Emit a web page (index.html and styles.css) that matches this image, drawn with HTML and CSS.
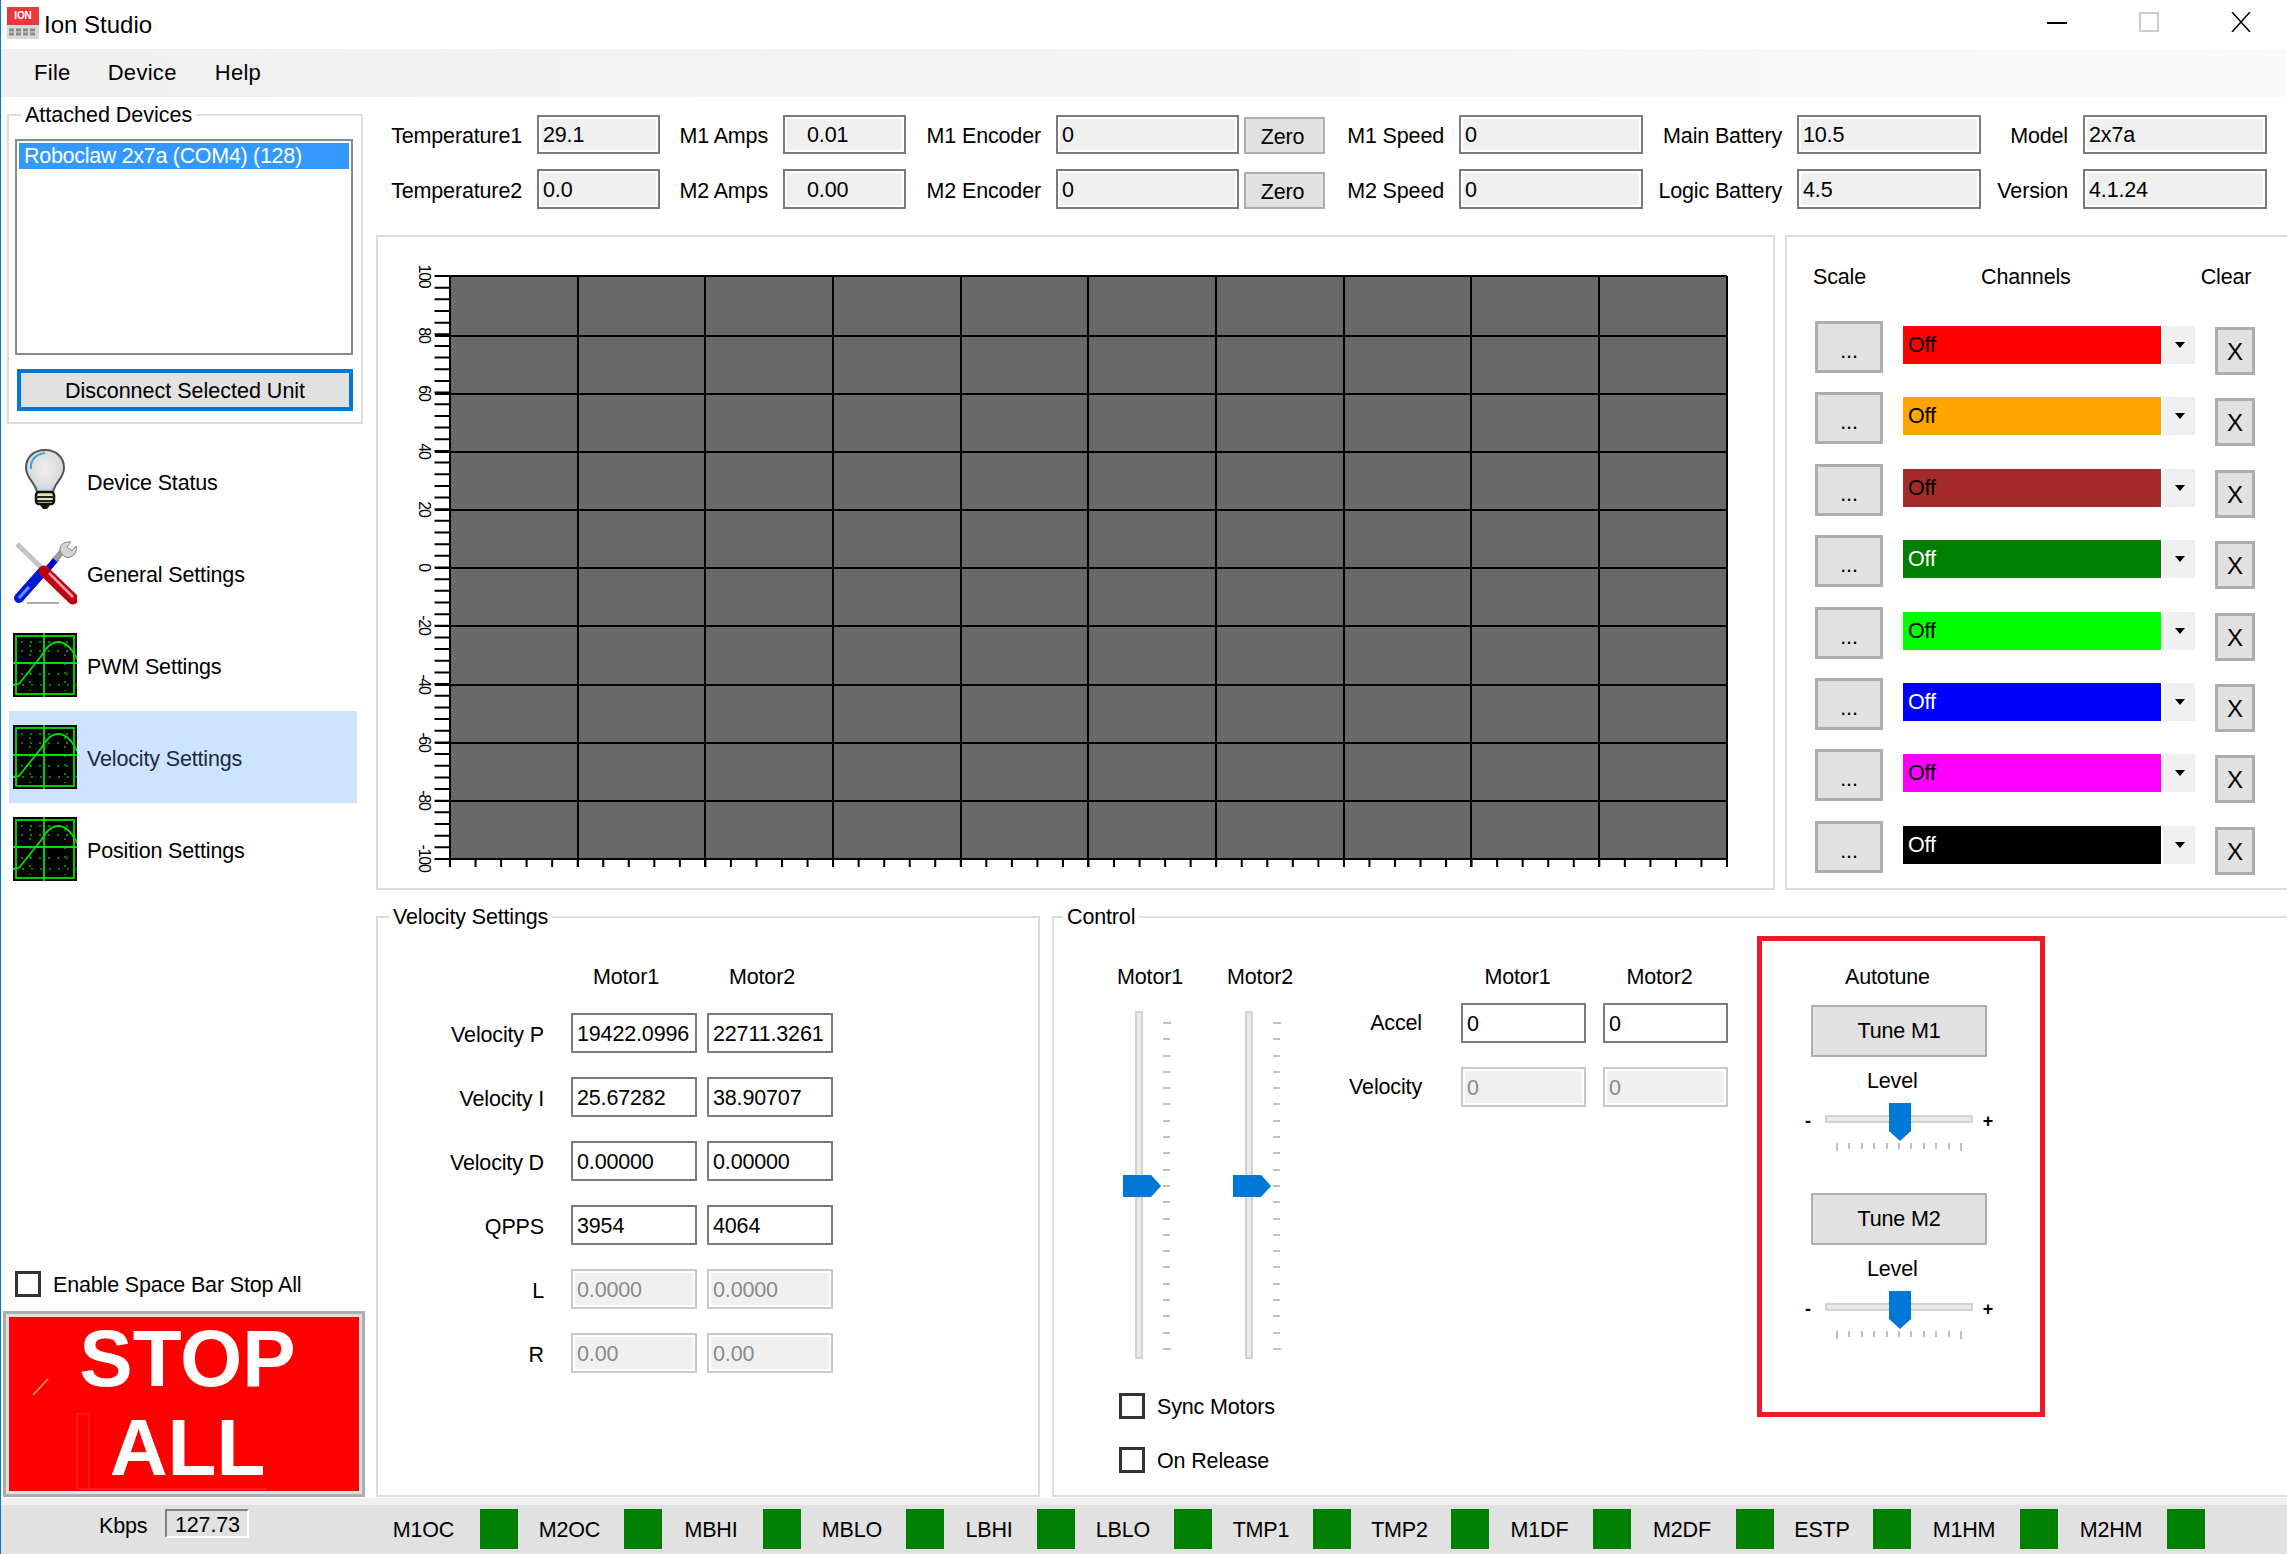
FILE: index.html
```html
<!DOCTYPE html>
<html lang="en">
<head>
    <meta charset="UTF-8">
    <title>Ion Studio</title>
    <link rel="stylesheet" href="styles.css">
</head>
<body>
    <!-- shared scope icon for the settings pages -->
    <svg class="defs" width="0" height="0">
        <symbol id="scope" viewBox="0 0 64 64">
            <rect class="scope-bg" width="64" height="64"/>
            <g class="scope-dots" fill="none" stroke-dasharray="2 7">
                <path d="M8 9H58M8 18H58M8 41H58M0 52H64"/>
                <path d="M17 12V58M52 12V58"/>
            </g>
            <g class="scope-line" fill="none" stroke-width="1.8">
                <rect x="3" y="3" width="58" height="58"/>
                <path d="M31 0V64M0 30H64"/>
                <path d="M0 52L6 51L29 22Q36 9 45 9Q56 9 64 26"/>
            </g>
        </symbol>
    </svg>

    <div class="window">
        <div class="titlebar">
            <svg class="logo" width="32" height="32" viewBox="0 0 32 32">
                <rect width="32" height="18" fill="#e8383c"/>
                <text x="16" y="12" text-anchor="middle" class="logo-text">ION</text>
                <rect y="18" width="32" height="14" fill="#d8d8d8"/>
                <path d="M2 23H30M2 27H30" stroke="#8a8a8a" stroke-width="3" stroke-dasharray="5 2"/>
            </svg>
            <span class="title">Ion Studio</span>
            <div class="caption-buttons">
                <div class="caption-btn"><svg width="20" height="20"><path d="M0 11H20" stroke="#000" stroke-width="2"/></svg></div>
                <div class="caption-btn"><svg width="20" height="20"><rect x="1" y="1" width="18" height="18" fill="none" stroke="#ccc" stroke-width="2"/></svg></div>
                <div class="caption-btn"><svg width="20" height="20"><path d="M1 0L19 20M19 0L1 20" stroke="#000" stroke-width="1.5"/></svg></div>
            </div>
        </div>

        <div class="menubar">
            <span class="menu-file">File</span>
            <span class="menu-device">Device</span>
            <span class="menu-help">Help</span>
        </div>

        <div class="main">
            <div class="sidebar">
                <fieldset class="group devices">
                    <legend class="devices-legend">Attached Devices</legend>
                    <div class="listbox">
                        <div class="list-selected">Roboclaw 2x7a (COM4) (128)</div>
                    </div>
                    <div class="btn disconnect">Disconnect Selected Unit</div>
                </fieldset>

                <div class="nav">
                    <div class="nav-item">
                        <svg class="nav-icon" viewBox="0 0 64 64">
                            <defs>
                                <radialGradient id="glass" cx="50%" cy="45%" r="55%">
                                    <stop offset="0" stop-color="#efefef"/>
                                    <stop offset=".75" stop-color="#dcdcdc"/>
                                    <stop offset="1" stop-color="#b4d0ee"/>
                                </radialGradient>
                            </defs>
                            <path d="M32 1C20 1 13 9 13 19C13 29 22 33 24 43H40C42 33 51 29 51 19C51 9 44 1 32 1Z" fill="url(#glass)" stroke="#555" stroke-width="2"/>
                            <path d="M18 20C17 11 23 5 32 4" fill="none" stroke="#3ea6d8" stroke-width="2"/>
                            <rect x="23" y="43" width="18" height="12" rx="3" fill="#e8e6b0" stroke="#111" stroke-width="2.5"/>
                            <path d="M23 48H41M24 52H40" stroke="#222" stroke-width="2"/>
                            <path d="M27 56H37L34 60H30Z" fill="#111"/>
                        </svg>
                        <span>Device Status</span>
                    </div>
                    <div class="nav-item">
                        <svg class="nav-icon" viewBox="0 0 64 64">
                            <path d="M14 62H46" stroke="#aaa" stroke-width="2"/>
                            <path d="M4 3L36 34" stroke="#c4c4c4" stroke-width="5"/>
                            <path d="M33 30L44 17" stroke="#0000c8" stroke-width="6"/>
                            <path d="M42 19L53 6" stroke="#9a9a9a" stroke-width="6"/>
                            <path d="M48 12C44 4 52 0 58 1L54 6L59 10L63 5C65 12 59 18 52 16Z" fill="#d4d4d4" stroke="#888"/>
                            <path d="M6 57L30 30" stroke="#0018d0" stroke-width="10" stroke-linecap="round"/>
                            <path d="M6 57L16 46" stroke="#5a90ff" stroke-width="3"/>
                            <path d="M31 30L60 58" stroke="#c00010" stroke-width="11" stroke-linecap="round"/>
                            <path d="M36 32L60 56" stroke="#ffa0a8" stroke-width="2.5"/>
                        </svg>
                        <span>General Settings</span>
                    </div>
                    <div class="nav-item">
                        <svg class="nav-icon"><use href="#scope"/></svg>
                        <span>PWM Settings</span>
                    </div>
                    <div class="nav-item selected">
                        <svg class="nav-icon"><use href="#scope"/></svg>
                        <span>Velocity Settings</span>
                    </div>
                    <div class="nav-item">
                        <svg class="nav-icon"><use href="#scope"/></svg>
                        <span>Position Settings</span>
                    </div>
                </div>

                <div class="check-row spacebar">
                    <div class="checkbox"></div>
                    <span>Enable Space Bar Stop All</span>
                </div>
                <div class="stop-btn">
                    <div class="stop-face">
                        <svg class="stop-marks" width="350" height="174">
                            <path d="M24 78L39 62" stroke="#ff9a9a" stroke-width="1.5" fill="none"/>
                            <path d="M68 172V97H80V172M68 172H258" stroke="#ff3030" stroke-width="1" fill="none"/>
                        </svg>
                        <span>STOP</span>
                        <span>ALL</span>
                    </div>
                </div>
            </div>

            <div class="content">
                <div class="readouts">
                    <div class="lbl">Temperature1</div>
                    <div class="field ro">29.1</div>
                    <div class="lbl">M1 Amps</div>
                    <div class="field ro amps">0.01</div>
                    <div class="lbl">M1 Encoder</div>
                    <div class="field ro">0</div>
                    <div class="btn zero">Zero</div>
                    <div class="lbl">M1 Speed</div>
                    <div class="field ro">0</div>
                    <div class="lbl">Main Battery</div>
                    <div class="field ro">10.5</div>
                    <div class="lbl">Model</div>
                    <div class="field ro">2x7a</div>

                    <div class="lbl">Temperature2</div>
                    <div class="field ro">0.0</div>
                    <div class="lbl">M2 Amps</div>
                    <div class="field ro amps">0.00</div>
                    <div class="lbl">M2 Encoder</div>
                    <div class="field ro">0</div>
                    <div class="btn zero">Zero</div>
                    <div class="lbl">M2 Speed</div>
                    <div class="field ro">0</div>
                    <div class="lbl">Logic Battery</div>
                    <div class="field ro">4.5</div>
                    <div class="lbl">Version</div>
                    <div class="field ro">4.1.24</div>
                </div>

                <div class="graph-row">
                    <div class="panel chart">
                        <!-- viewBox uses window coordinates so the grid lines read straight off the screen -->
                        <svg width="1395" height="651" viewBox="378 237 1395 651">
                            <rect x="450" y="276" width="1277" height="583" fill="#696969"/>
                            <path d="M450 276V867M578 276V867M705 276V867M833 276V867M961 276V867M1088 276V867M1216 276V867M1344 276V867M1471 276V867M1599 276V867M1727 276V867" stroke="#000" stroke-width="2" fill="none"/>
                            <path d="M435 276H1727M435 336H1727M435 394H1727M435 452H1727M435 510H1727M435 568H1727M435 626H1727M435 685H1727M435 743H1727M435 801H1727M435 859H1727" stroke="#000" stroke-width="2" fill="none"/>
                            <line class="tick" x1="442" y1="275" x2="442" y2="860" stroke-width="15" stroke-dasharray="2 9.66"/>
                            <line class="tick" x1="449" y1="863" x2="1728" y2="863" stroke-width="8" stroke-dasharray="2 23.54"/>
                            <g class="axis">
                                <text transform="translate(419 276) rotate(90)">100</text>
                                <text transform="translate(419 335) rotate(90)">80</text>
                                <text transform="translate(419 393) rotate(90)">60</text>
                                <text transform="translate(419 451) rotate(90)">40</text>
                                <text transform="translate(419 509) rotate(90)">20</text>
                                <text transform="translate(419 567) rotate(90)">0</text>
                                <text transform="translate(419 625) rotate(90)">-20</text>
                                <text transform="translate(419 684) rotate(90)">-40</text>
                                <text transform="translate(419 742) rotate(90)">-60</text>
                                <text transform="translate(419 800) rotate(90)">-80</text>
                                <text transform="translate(419 858) rotate(90)">-100</text>
                            </g>
                        </svg>
                    </div>

                    <div class="panel channels">
                        <div class="channel-heads">
                            <span class="head-scale">Scale</span>
                            <span class="head-channels">Channels</span>
                            <span class="head-clear">Clear</span>
                        </div>
                        <div class="channel-list">
                            <div class="channel"><div class="btn scale">...</div><div class="combo c-red">Off</div><div class="combo-arrow"></div><div class="btn clear">X</div></div>
                            <div class="channel"><div class="btn scale">...</div><div class="combo c-orange">Off</div><div class="combo-arrow"></div><div class="btn clear">X</div></div>
                            <div class="channel"><div class="btn scale">...</div><div class="combo c-brown">Off</div><div class="combo-arrow"></div><div class="btn clear">X</div></div>
                            <div class="channel"><div class="btn scale">...</div><div class="combo c-green">Off</div><div class="combo-arrow"></div><div class="btn clear">X</div></div>
                            <div class="channel"><div class="btn scale">...</div><div class="combo c-lime">Off</div><div class="combo-arrow"></div><div class="btn clear">X</div></div>
                            <div class="channel"><div class="btn scale">...</div><div class="combo c-blue">Off</div><div class="combo-arrow"></div><div class="btn clear">X</div></div>
                            <div class="channel"><div class="btn scale">...</div><div class="combo c-magenta">Off</div><div class="combo-arrow"></div><div class="btn clear">X</div></div>
                            <div class="channel"><div class="btn scale">...</div><div class="combo c-black">Off</div><div class="combo-arrow"></div><div class="btn clear">X</div></div>
                        </div>
                    </div>
                </div>

                <div class="bottom-row">
                    <fieldset class="group velocity">
                        <legend class="velocity-legend">Velocity Settings</legend>
                        <div class="pid-grid">
                            <div></div>
                            <div class="col-head">Motor1</div>
                            <div class="col-head">Motor2</div>

                            <div class="lbl">Velocity P</div>
                            <div class="field">19422.0996</div>
                            <div class="field">22711.3261</div>

                            <div class="lbl">Velocity I</div>
                            <div class="field">25.67282</div>
                            <div class="field">38.90707</div>

                            <div class="lbl">Velocity D</div>
                            <div class="field">0.00000</div>
                            <div class="field">0.00000</div>

                            <div class="lbl">QPPS</div>
                            <div class="field">3954</div>
                            <div class="field">4064</div>

                            <div class="lbl">L</div>
                            <div class="field off">0.0000</div>
                            <div class="field off">0.0000</div>

                            <div class="lbl">R</div>
                            <div class="field off">0.00</div>
                            <div class="field off">0.00</div>
                        </div>
                    </fieldset>

                    <fieldset class="group control">
                        <legend class="control-legend">Control</legend>
                        <div class="control-body">
                            <div class="sliders">
                                <div class="slider-cols">
                                    <div class="slider-col">
                                        <div class="slider-name">Motor1</div>
                                        <div class="vslider">
                                            <div class="vrail"></div>
                                            <div class="vticks"><i></i><i></i><i></i><i></i><i></i><i></i><i></i><i></i><i></i><i></i><i></i><i></i><i></i><i></i><i></i><i></i><i></i><i></i><i></i><i></i><i></i></div>
                                            <div class="vthumb"></div>
                                        </div>
                                    </div>
                                    <div class="slider-col">
                                        <div class="slider-name">Motor2</div>
                                        <div class="vslider">
                                            <div class="vrail"></div>
                                            <div class="vticks"><i></i><i></i><i></i><i></i><i></i><i></i><i></i><i></i><i></i><i></i><i></i><i></i><i></i><i></i><i></i><i></i><i></i><i></i><i></i><i></i><i></i></div>
                                            <div class="vthumb"></div>
                                        </div>
                                    </div>
                                </div>
                                <div class="check-row sync">
                                    <div class="checkbox"></div>
                                    <span>Sync Motors</span>
                                </div>
                                <div class="check-row release">
                                    <div class="checkbox"></div>
                                    <span>On Release</span>
                                </div>
                            </div>

                            <div class="accel-grid">
                                <div></div>
                                <div class="col-head">Motor1</div>
                                <div class="col-head">Motor2</div>
                                <div class="lbl">Accel</div>
                                <div class="field">0</div>
                                <div class="field">0</div>
                                <div class="lbl">Velocity</div>
                                <div class="field off">0</div>
                                <div class="field off">0</div>
                            </div>

                            <div class="autotune">
                                <div class="autotune-title">Autotune</div>
                                <div class="btn tune">Tune M1</div>
                                <div class="level">Level</div>
                                <div class="hslider">
                                    <span class="hsign">-</span>
                                    <div class="hbody">
                                        <div class="hrail"></div>
                                        <div class="hticks"><i></i><i></i><i></i><i></i><i></i><i></i><i></i><i></i><i></i><i></i><i></i></div>
                                        <div class="hthumb"></div>
                                    </div>
                                    <span class="hsign plus">+</span>
                                </div>
                                <div class="btn tune tune-2">Tune M2</div>
                                <div class="level">Level</div>
                                <div class="hslider">
                                    <span class="hsign">-</span>
                                    <div class="hbody">
                                        <div class="hrail"></div>
                                        <div class="hticks"><i></i><i></i><i></i><i></i><i></i><i></i><i></i><i></i><i></i><i></i><i></i></div>
                                        <div class="hthumb"></div>
                                    </div>
                                    <span class="hsign plus">+</span>
                                </div>
                            </div>
                        </div>
                    </fieldset>
                </div>
            </div>
        </div>

        <div class="statusbar">
            <div class="kbps">
                <span>Kbps</span>
                <div class="kbps-value">127.73</div>
            </div>
            <div class="flags">
                <span>M1OC</span><i class="flag"></i>
                <span>M2OC</span><i class="flag"></i>
                <span>MBHI</span><i class="flag"></i>
                <span>MBLO</span><i class="flag"></i>
                <span>LBHI</span><i class="flag"></i>
                <span>LBLO</span><i class="flag"></i>
                <span>TMP1</span><i class="flag"></i>
                <span>TMP2</span><i class="flag"></i>
                <span>M1DF</span><i class="flag"></i>
                <span>M2DF</span><i class="flag"></i>
                <span>ESTP</span><i class="flag"></i>
                <span>M1HM</span><i class="flag"></i>
                <span>M2HM</span><i class="flag"></i>
            </div>
        </div>
    </div>
</body>
</html>
```

FILE: styles.css
```css
* {
    box-sizing: border-box;
}
html, body {
    margin: 0;
    padding: 0;
    background: #fff;
}
body {
    font-family: "Liberation Sans", Arial, sans-serif;
    font-size: 21.5px;
    line-height: 24px;
    letter-spacing: -0.15px;
    color: #000;
}
.defs {
    position: absolute;
}
.window {
    width: 2287px;
    height: 1554px;
    display: flex;
    flex-direction: column;
    overflow: hidden;
    border-left: 1px solid #0078d7;
}

/* title + menu */
.titlebar {
    height: 49px;
    flex: none;
    display: flex;
    align-items: center;
    padding-left: 6px;
}
.logo {
    margin-top: -3px;
}
.logo-text {
    font-size: 10px;
    font-weight: bold;
    fill: #fff;
}
.title {
    margin-left: 5px;
    font-size: 24px;
    letter-spacing: 0;
}
.caption-buttons {
    margin-left: auto;
    display: flex;
    margin-top: -5px;
}
.caption-btn {
    width: 92px;
    display: flex;
    justify-content: center;
}
.menubar {
    height: 48px;
    flex: none;
    display: flex;
    align-items: center;
    background: linear-gradient(to right, #f0f0f0, #fafafa);
    font-size: 22px;
    letter-spacing: 0.3px;
}
.menu-file {
    margin-left: 33px;
}
.menu-device {
    margin-left: 37px;
}
.menu-help {
    margin-left: 38px;
}

.main {
    flex: 1;
    display: flex;
    min-height: 0;
}

/* group boxes */
.group {
    margin: 0;
    padding: 0;
    border: 2px solid #dcdcdc;
    min-width: 0;
}
.group legend {
    padding: 0 4px;
    line-height: 24px;
}

/* common controls */
.btn {
    display: flex;
    align-items: center;
    justify-content: center;
    padding-top: 2px;
    background: #e1e1e1;
    border: 3px solid #adadad;
}
.field {
    display: flex;
    align-items: center;
    padding: 1px 0 0 4px;
    background: #fff;
    border: 2px solid #7a7a7a;
    white-space: nowrap;
}
.field.ro {
    background: #f0f0f0;
    box-shadow: inset 0 0 0 2px #fff;
}
.field.ro.amps {
    padding-left: 22px;
}
.field.off {
    background: #f0f0f0;
    border-color: #c8c8c8;
    box-shadow: inset 0 0 0 2px #fff;
    color: #8a8a8a;
}
.lbl {
    display: flex;
    align-items: center;
    justify-content: flex-end;
    white-space: nowrap;
    padding-top: 3px;
}
.check-row {
    display: flex;
    align-items: center;
    gap: 12px;
    height: 26px;
}
.check-row span {
    padding-top: 2px;
}
.checkbox {
    width: 26px;
    height: 26px;
    border: 3px solid #333;
    background: #fff;
    flex: none;
}

/* left column */
.sidebar {
    width: 375px;
    flex: none;
    display: flex;
    flex-direction: column;
    padding-top: 6px;
    padding-bottom: 1px;
}
.devices {
    margin-left: 6px;
    width: 356px;
    height: 321px;
}
.devices-legend {
    margin-left: 12px;
    letter-spacing: 0;
}
.listbox {
    margin: 12px 0 0 6px;
    width: 338px;
    height: 216px;
    border: 2px solid #868a91;
    padding: 2px;
}
.list-selected {
    height: 26px;
    width: 330px;
    padding-left: 5px;
    background: #3399ff;
    color: #fff;
    line-height: 26px;
    letter-spacing: -0.3px;
}
.disconnect {
    margin: 14px 0 0 8px;
    width: 336px;
    height: 42px;
    border: 4px solid #0078d7;
    letter-spacing: 0;
}
.nav {
    margin: 11px 0 0 8px;
    width: 348px;
}
.nav-item {
    height: 92px;
    display: flex;
    align-items: center;
    gap: 10px;
    padding-left: 4px;
}
.nav-item span {
    padding-top: 3px;
}
.nav-item.selected {
    background: #cce4ff;
    color: #1a2a40;
}
.nav-icon {
    width: 64px;
    height: 64px;
    flex: none;
}
.scope-bg {
    fill: #000;
}
.scope-line {
    stroke: #00e000;
}
.scope-dots {
    stroke: #00b000;
    stroke-width: 1.5;
}
.selected .scope-bg {
    fill: #071c33;
}
.selected .scope-line {
    stroke: #00c428;
}
.selected .scope-dots {
    stroke: #00a020;
}
.spacebar {
    margin-top: auto;
    margin-left: 14px;
}
.stop-btn {
    margin: 14px 0 0 2px;
    width: 362px;
    height: 186px;
    flex: none;
    border: 3px solid #adadad;
    padding: 3px;
    background: #e1e1e1;
}
.stop-face {
    position: relative;
    height: 100%;
    padding: 0 0 2px 7px;
    background: #f00;
    display: flex;
    flex-direction: column;
    align-items: center;
    justify-content: center;
    color: #fff;
    font-weight: bold;
    font-size: 80px;
    line-height: 89px;
    letter-spacing: 0;
}
.stop-marks {
    position: absolute;
    left: 0;
    top: 0;
}

/* right side */
.content {
    flex: 1;
    min-width: 0;
    padding-top: 18px;
    display: flex;
    flex-direction: column;
}
.readouts {
    display: grid;
    grid-template-columns: 161px 123px 123px 123px 150px 183px 86px 134px 184px 154px 184px 102px 184px;
    grid-template-rows: 39px 40px;
    row-gap: 15px;
}
.readouts .lbl {
    padding-right: 15px;
}
.zero {
    justify-self: end;
    align-self: end;
    width: 81px;
    height: 37px;
    padding-right: 4px;
    border-width: 2px;
}
.graph-row {
    margin-top: 26px;
    display: flex;
    gap: 10px;
    height: 655px;
    flex: none;
}
.panel {
    border: 2px solid #dcdcdc;
    flex: none;
}
.chart {
    width: 1399px;
}
.chart svg {
    display: block;
}
.tick {
    stroke: #000;
}
.axis text {
    font-size: 16px;
    letter-spacing: -1.2px;
    text-anchor: middle;
}
.channels {
    width: 520px;
    padding-left: 26px;
}
.channel-heads {
    display: flex;
    height: 24px;
    margin-top: 28px;
}
.head-channels {
    margin-left: 115px;
}
.head-clear {
    margin-left: 130px;
}
.channel-list {
    margin-top: 32px;
    padding-left: 2px;
    display: grid;
    grid-auto-rows: 71.4px;
}
.channel {
    display: flex;
    align-items: flex-start;
}
.scale {
    width: 68px;
    height: 52px;
    padding-top: 8px;
}
.combo {
    width: 258px;
    height: 38px;
    margin: 5px 0 0 20px;
    padding-left: 5px;
    line-height: 38px;
}
.c-red { background: #f00; }
.c-orange { background: #ffa500; }
.c-brown { background: #a52a2a; }
.c-green { background: #008000; color: #fff; }
.c-lime { background: #0f0; }
.c-blue { background: #00f; color: #fff; }
.c-magenta { background: #f0f; }
.c-black { background: #000; color: #fff; }
.combo-arrow {
    width: 32px;
    height: 38px;
    margin: 5px 0 0 2px;
    background: #f0f0f0;
    position: relative;
}
.combo-arrow::after {
    content: "";
    position: absolute;
    left: 12px;
    top: 16px;
    border-left: 5px solid transparent;
    border-right: 5px solid transparent;
    border-top: 6px solid #000;
}
.clear {
    width: 40px;
    height: 48px;
    margin: 6px 0 0 20px;
    font-size: 24px;
}
.bottom-row {
    margin-top: 15px;
    height: 592px;
    flex: none;
    display: flex;
    gap: 12px;
}
.velocity {
    width: 664px;
    flex: none;
}
.velocity-legend {
    margin-left: 11px;
}
.pid-grid {
    padding-top: 36px;
    display: grid;
    grid-template-columns: 193px 136px 126px;
    grid-template-rows: 24px;
    grid-auto-rows: 40px;
    row-gap: 24px;
}
.pid-grid .lbl {
    padding-right: 27px;
}
.pid-grid .col-head {
    width: 126px;
    padding-right: 16px;
    text-align: center;
}
.pid-grid .field {
    width: 126px;
}
.control {
    width: 1245px;
    flex: none;
}
.control-legend {
    margin-left: 9px;
}
.control-body {
    display: flex;
    align-items: flex-start;
}
.sliders {
    margin-left: 63px;
    width: 220px;
    padding-top: 36px;
    flex: none;
}
.slider-cols {
    display: flex;
}
.slider-col {
    width: 110px;
}
.vslider {
    position: relative;
    display: flex;
    height: 348px;
    margin: 22px 0 0 18px;
}
.vrail {
    width: 8px;
    height: 100%;
    background: #e7eaea;
    border: 2px solid #d2d2d2;
}
.vticks {
    margin: 11px 0 0 20px;
    height: 328px;
    display: flex;
    flex-direction: column;
    justify-content: space-between;
}
.vticks i {
    display: block;
    width: 7px;
    height: 2px;
    background: #c0c0c0;
}
.vticks i:first-child,
.vticks i:last-child {
    width: 8px;
}
.vthumb {
    position: absolute;
    left: -12px;
    top: 164px;
    width: 38px;
    height: 22px;
    background: #0078d7;
    clip-path: polygon(0 0, 74% 0, 100% 50%, 74% 100%, 0 100%);
}
.sync {
    margin: 34px 0 0 2px;
}
.release {
    margin: 28px 0 0 2px;
}
.accel-grid {
    padding-top: 36px;
    display: grid;
    grid-template-columns: 124px 142px 126px;
    grid-template-rows: 14px 40px 40px;
    row-gap: 24px;
    flex: none;
}
.accel-grid .lbl {
    padding: 0 39px 0 0;
}
.accel-grid .col-head {
    width: 125px;
    padding-right: 12px;
    text-align: center;
}
.accel-grid .field {
    width: 125px;
}
.autotune {
    margin: 7px 0 0 28px;
    width: 288px;
    height: 481px;
    flex: none;
    border: 5px solid #ed1c24;
    padding: 24px 0 0 49px;
}
.autotune-title {
    margin-left: 34px;
}
.tune {
    margin-top: 16px;
    width: 176px;
    height: 52px;
    border-width: 2px;
    padding-top: 0;
}
.tune-2 {
    margin-top: 42px;
}
.level {
    margin: 12px 0 0 56px;
    height: 23px;
}
.hslider {
    margin: 11px 0 0 -6px;
    width: 188px;
    height: 48px;
    display: grid;
    grid-template-columns: 20px 148px 20px;
}
.hsign {
    margin-top: 6px;
    font-weight: bold;
    font-size: 18px;
}
.hsign.plus {
    text-align: right;
}
.hbody {
    position: relative;
}
.hrail {
    margin-top: 12px;
    height: 8px;
    background: #e7eaea;
    border: 2px solid #d2d2d2;
}
.hticks {
    margin: 20px 11px 0;
    display: flex;
    justify-content: space-between;
}
.hticks i {
    display: block;
    width: 2px;
    height: 6px;
    background: #c0c0c0;
}
.hticks i:first-child,
.hticks i:last-child {
    height: 8px;
}
.hthumb {
    position: absolute;
    left: 64px;
    top: 0;
    width: 22px;
    height: 38px;
    background: #0078d7;
    clip-path: polygon(0 0, 100% 0, 100% 74%, 50% 100%, 0 74%);
}

/* status bar */
.statusbar {
    height: 56px;
    flex: none;
    display: flex;
    background: #e1e1e1;
    border-top: 7px solid #f0f0f0;
    padding-top: 4px;
}
.kbps {
    width: 369px;
    flex: none;
    display: flex;
    align-items: flex-start;
    padding-left: 98px;
}
.kbps span {
    padding-top: 5px;
}
.kbps-value {
    margin-left: 18px;
    width: 84px;
    height: 29px;
    text-align: center;
    line-height: 28px;
    border: 2px solid #808080;
    border-right-color: #fff;
    border-bottom-color: #fff;
}
.flags {
    display: grid;
    grid-template-columns: 110px 38px 106px 38px 101px 38px 105px 38px 93px 38px 99px 38px 101px 38px 100px 38px 104px 38px 105px 38px 99px 38px 109px 38px 109px 38px;
    grid-template-rows: 40px;
}
.flags span {
    padding-right: 3px;
    text-align: center;
    line-height: 42px;
}
.flag {
    background: #008000;
}
```
